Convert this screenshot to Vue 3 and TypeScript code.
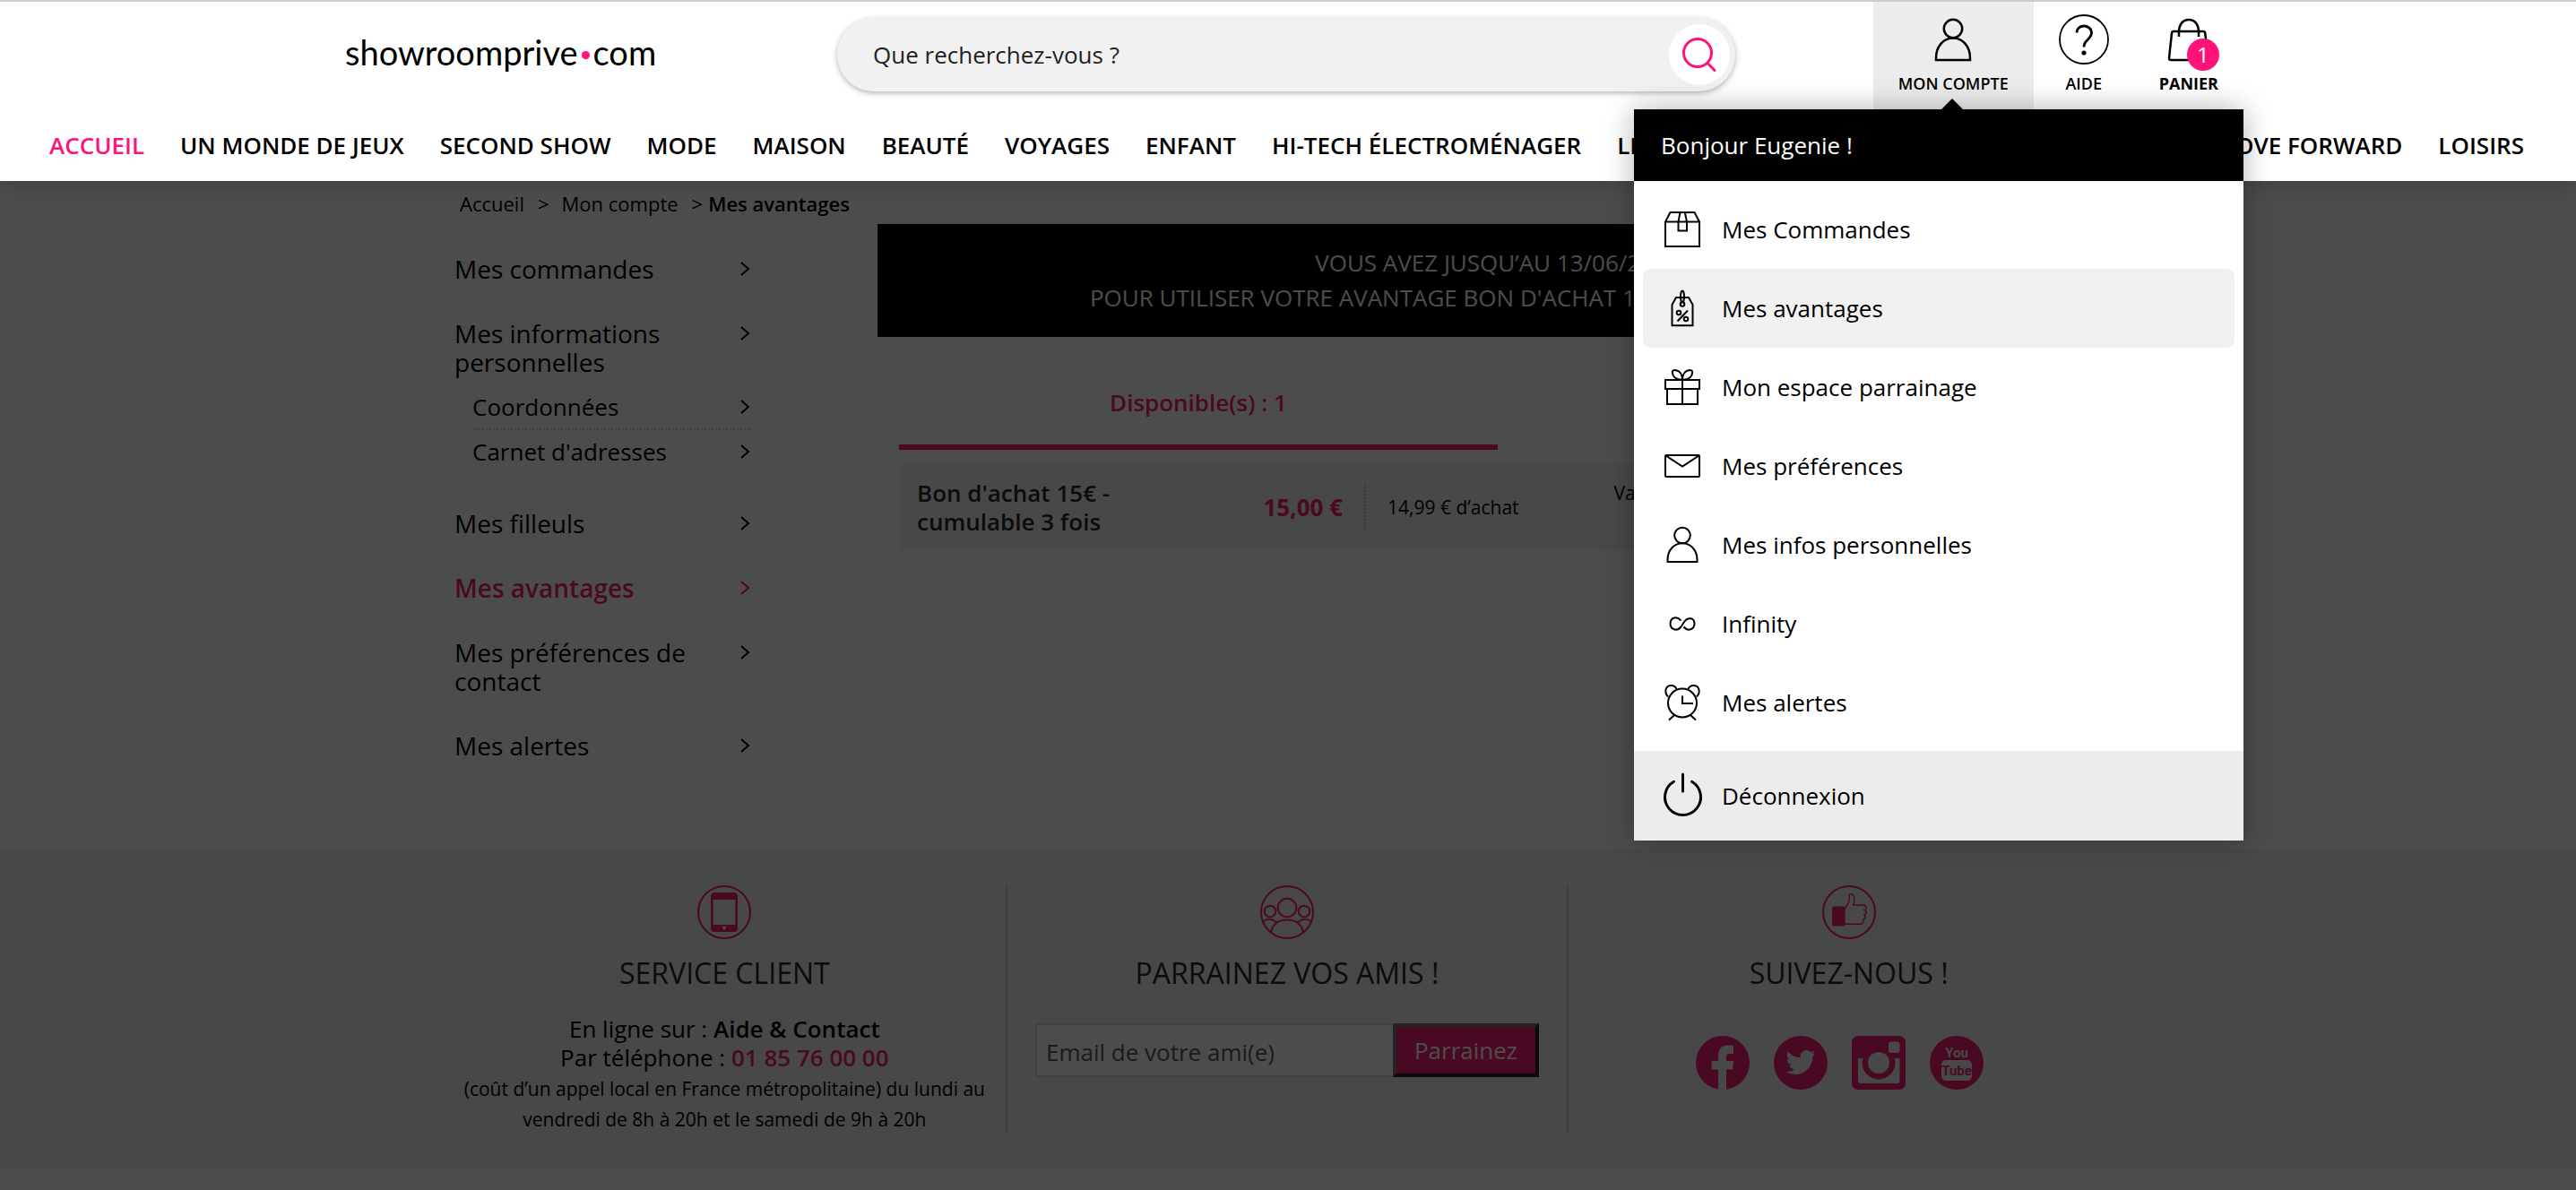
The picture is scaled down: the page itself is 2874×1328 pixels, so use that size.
<script setup lang="ts">
import { ref } from 'vue'

interface MenuEntry {
  label: string
  icon: string
}

const search = ref('')
const friendEmail = ref('')

const navStart: string[] = [
  'ACCUEIL',
  'UN MONDE DE JEUX',
  'SECOND SHOW',
  'MODE',
  'MAISON',
  'BEAUTÉ',
  'VOYAGES',
  'ENFANT',
  'HI-TECH ÉLECTROMÉNAGER',
  'LIFESTYLE',
]
const navEnd: string[] = ['MOVE FORWARD', 'LOISIRS']

const accountMenu: MenuEntry[] = [
  { label: 'Mes Commandes', icon: 'box' },
  { label: 'Mes avantages', icon: 'tag' },
  { label: 'Mon espace parrainage', icon: 'gift' },
  { label: 'Mes préférences', icon: 'mail' },
  { label: 'Mes infos personnelles', icon: 'person' },
  { label: 'Infinity', icon: 'infinity' },
  { label: 'Mes alertes', icon: 'alarm' },
]
const activeEntry = 'Mes avantages'

const sideMenu: { label: string; children?: string[] }[] = [
  { label: 'Mes commandes' },
  { label: 'Mes informations personnelles', children: ['Coordonnées', "Carnet d'adresses"] },
  { label: 'Mes filleuls' },
  { label: 'Mes avantages' },
  { label: 'Mes préférences de contact' },
  { label: 'Mes alertes' },
]
</script>

<template>
  <div class="page">
    <header class="header">
      <div class="top">
        <div class="top-inner">
          <a class="logo" href="#"><span>showroomprive</span><i class="logo-dot"></i><span>com</span></a>

          <form class="search" role="search" @submit.prevent>
            <input v-model="search" type="text" placeholder="Que recherchez-vous ?" aria-label="Rechercher" />
            <button type="submit" aria-label="Lancer la recherche">
              <svg viewBox="0 0 40 40" width="40" height="40" class="line pink-line">
                <circle cx="18" cy="18" r="15.5" />
                <path d="M29 29.5l8 8" stroke-linecap="round" />
              </svg>
            </button>
          </form>

          <div class="actions">
            <button type="button" class="action current" aria-expanded="true">
              <svg viewBox="0 0 56 56" width="56" height="56" class="line">
                <circle cx="28" cy="16" r="10.2" />
                <path d="M9 51v-2C9 36 17 26.500 28 26.500S47 36 47 49v2z" />
              </svg>
              <span>MON COMPTE</span>
            </button>
            <a class="action" href="#">
              <svg viewBox="0 0 56 56" width="56" height="56" class="line">
                <circle cx="28" cy="28" r="27" stroke-width="1.800" />
                <path d="M20 20.500c0-4.500 3.500-7.500 8-7.500s8.500 3 8.500 7.500c0 3.500-2 5.500-4.500 8-2.500 2.300-4 4-4 8" stroke-width="2.800" />
                <circle cx="28" cy="43" r="2.600" fill="#000" stroke="none" />
              </svg>
              <span>AIDE</span>
            </a>
            <a class="action basket" href="#">
              <span class="basket-icon">
                <svg viewBox="0 0 56 56" width="56" height="56" class="line">
                  <path d="M11 19h33q2 0 2.200 2l3.800 28q0 2-2 2H8q-2 0-2-2l3-28q.3-2 2-2z" />
                  <path d="M17 25v-5C17 11 21.500 6 28 6s11 5 11 14v5" />
                </svg>
                <b class="badge">1</b>
              </span>
              <span>PANIER</span>
            </a>

            <div class="account">
              <p class="hello">Bonjour Eugenie !</p>
              <ul>
                <li v-for="entry in accountMenu" :key="entry.label">
                  <a href="#" :class="{ active: entry.label === activeEntry }">
                    <svg viewBox="0 0 40 40" width="40" height="40" class="line">
                      <template v-if="entry.icon === 'box'">
                        <path d="M1 11.500L6.500 1h27L39 11.500V39H1zM1 11.500h38" />
                        <path d="M17.500 1l-2 10.500v10h9.500v-10L22.800 1" />
                      </template>
                      <template v-else-if="entry.icon === 'tag'">
                        <path d="M13 8h14l4.500 8v23.200h-23V16z" />
                        <ellipse cx="20" cy="7" rx="2" ry="6.500" />
                        <circle cx="20" cy="15.500" r="2.300" />
                        <circle cx="16" cy="25" r="2.300" />
                        <circle cx="24" cy="32" r="2.300" />
                        <path d="M26 22.500L14.500 34.500" />
                      </template>
                      <template v-else-if="entry.icon === 'gift'">
                        <path d="M1 12h38v10H1zM3 22h34v17H3zM20 12v27" />
                        <path d="M20 12C12 11.500 9 8 8.800 3.500 8.700 1.500 10 1 12 1c5 .5 8 5 8 11zM20 12c8-.5 11-4 11.200-8.500C31.300 1.500 30 1 28 1c-5 .5-8 5-8 11z" />
                      </template>
                      <template v-else-if="entry.icon === 'mail'">
                        <rect x="1" y="8" width="38" height="24" rx="1" />
                        <path d="M1.500 8.500L20 20.500l18.500-12" />
                      </template>
                      <template v-else-if="entry.icon === 'person'">
                        <circle cx="20" cy="9.500" r="8.800" />
                        <path d="M3.500 39v-2c0-11 7-18.700 16.500-18.700S36.500 26 36.500 37v2z" />
                      </template>
                      <template v-else-if="entry.icon === 'infinity'">
                        <path d="M18.500 16.500c-6-6-12-2.500-12 3.500s7 9.500 12 3.500l3.500-5.500c4.500-6.500 11.500-4 11.500 2s-7 9.500-12 3.500" />
                      </template>
                      <template v-else>
                        <circle cx="20" cy="20.500" r="16" />
                        <path d="M20 12.500v8.500h12M11 34l-6 5.500M29 34l6 5.500M4 13.500C-1 8 1.500 1 7.500 1c3 0 5 1.500 6 4M36 13.500C41 8 38.500 1 32.500 1c-3 0-5 1.500-6 4" />
                      </template>
                    </svg>
                    {{ entry.label }}
                  </a>
                </li>
              </ul>
              <button type="button" class="logout">
                <svg viewBox="0 0 40 40" width="40" height="40" class="line power">
                  <path d="M10.500 4.200a20 20 0 1 0 20 0M20.500-4v19" />
                </svg>
                Déconnexion
              </button>
            </div>
          </div>
        </div>
      </div>

      <nav class="nav">
        <div>
          <a v-for="(label, i) in navStart" :key="label" href="#" :class="{ here: i === 0 }">{{ label }}</a>
        </div>
        <div>
          <a v-for="label in navEnd" :key="label" href="#">{{ label }}</a>
        </div>
      </nav>
    </header>

    <div class="body">
      <main class="main">
        <div class="wrap">
          <div class="crumbs">
            <a href="#">Accueil</a><span>&gt;</span><a href="#">Mon compte</a><span>&gt;</span><strong>Mes avantages</strong>
          </div>
          <div class="columns">
            <aside class="side">
              <ul>
                <li v-for="item in sideMenu" :key="item.label" :class="{ selected: item.label === 'Mes avantages' }">
                  <a href="#">
                    <span>{{ item.label }}</span>
                    <svg viewBox="0 0 12 20" width="12" height="20" class="chevron"><path d="M2 3l8 7-8 7" /></svg>
                  </a>
                  <ul v-if="item.children" class="sub">
                    <li v-for="child in item.children" :key="child">
                      <a href="#">
                        <span>{{ child }}</span>
                        <svg viewBox="0 0 12 20" width="12" height="20" class="chevron"><path d="M2 3l8 7-8 7" /></svg>
                      </a>
                    </li>
                  </ul>
                </li>
              </ul>
            </aside>

            <section class="content">
              <p class="banner">
                VOUS AVEZ JUSQU’AU 13/06/2021<br />
                POUR UTILISER VOTRE AVANTAGE BON D'ACHAT 15€ - CUMULABLE 3 FOIS !
              </p>
              <div class="tabs">
                <button type="button" class="on">Disponible(s) : 1</button>
                <button type="button">Utilisé(s) : 0</button>
              </div>
              <div class="voucher">
                <h2>Bon d'achat 15€ - cumulable 3 fois</h2>
                <strong>15,00 €</strong>
                <span class="minimum">14,99 € d’achat</span>
                <span class="validity">Valable jusqu’au<br />13/06/2021</span>
              </div>
            </section>
          </div>
        </div>
      </main>

      <footer class="footer">
        <div class="footer-inner">
          <section>
            <svg viewBox="0 0 60 60" width="60" height="60" class="round">
              <circle cx="30" cy="30" r="29" />
              <rect x="16" y="9" width="28" height="42" rx="3" class="solid" />
              <rect x="17.500" y="16" width="25" height="28" class="cut" />
              <circle cx="30" cy="47.500" r="2" class="cut" />
            </svg>
            <h3>SERVICE CLIENT</h3>
            <p class="lines">
              En ligne sur : <a href="#">Aide &amp; Contact</a><br />
              Par téléphone : <a href="#" class="phone">01 85 76 00 00</a>
            </p>
            <p class="hours">
              (coût d’un appel local en France métropolitaine) du lundi au<br />
              vendredi de 8h à 20h et le samedi de 9h à 20h
            </p>
          </section>
          <section>
            <svg viewBox="0 0 60 60" width="60" height="60" class="round">
              <circle cx="30" cy="30" r="29" />
              <circle cx="30" cy="25" r="10.300" />
              <circle cx="11" cy="29" r="6.300" />
              <circle cx="49" cy="29" r="6.300" />
              <path d="M12 52C14 43 21 38.500 30 38.500S46 43 48 52M3.500 40.500C8 36.500 14 37 18.500 42M56.500 40.500C52 36.500 46 37 41.500 42" />
            </svg>
            <h3>PARRAINEZ VOS AMIS !</h3>
            <form class="invite" @submit.prevent>
              <input v-model="friendEmail" type="email" placeholder="Email de votre ami(e)" aria-label="Email de votre ami(e)" />
              <button type="submit">Parrainez</button>
            </form>
          </section>
          <section>
            <svg viewBox="0 0 60 60" width="60" height="60" class="round">
              <circle cx="30" cy="30" r="29" />
              <rect x="12" y="24.500" width="12.500" height="20" rx="1" class="solid" />
              <path d="M24.500 27c3-4 5-6.500 5.500-10 .3-2 0-4 .2-6 .3-2 4.300-1.800 5.300 1.500 1 3-.2 6-.5 9.500h11c3.500 0 4 5 1.500 5.500 2.500 1.500 2 5-.5 5.500 1.500 2 .5 5-1.500 5.500 1 3-.5 4.800-3 4.800H27l-2.500-1" stroke-width="1.500" />
            </svg>
            <h3>SUIVEZ-NOUS !</h3>
            <div class="social">
              <a href="#" aria-label="Facebook">
                <svg viewBox="0 0 60 60" width="60" height="60">
                  <circle cx="30" cy="30" r="30" class="fill" />
                  <path class="cut" d="M25 60V37.500h-7.500V28H25v-5.500C25 14.500 29 10.500 35 10.500h7V20h-4.500c-2.800 0-3.500 1.500-3.500 4v4h8l-1 9.500h-7V60z" />
                </svg>
              </a>
              <a href="#" aria-label="Twitter">
                <svg viewBox="0 0 60 60" width="60" height="60">
                  <circle cx="30" cy="30" r="30" class="fill" />
                  <path class="cut" transform="translate(13.500 13) scale(1.380)" d="M23.950 4.570a10 10 0 0 1-2.820.77 4.960 4.960 0 0 0 2.160-2.720c-.95.560-2 .96-3.130 1.190a4.920 4.920 0 0 0-8.380 4.480C7.690 8.100 4.070 6.130 1.640 3.160a4.820 4.820 0 0 0-.67 2.480c0 1.710.87 3.210 2.190 4.100a4.900 4.900 0 0 1-2.230-.62v.06a4.920 4.920 0 0 0 3.950 4.830 5 5 0 0 1-2.210.08 4.940 4.940 0 0 0 4.600 3.420A9.870 9.870 0 0 1 0 19.540a14 14 0 0 0 7.550 2.210c9.050 0 14-7.500 14-13.980 0-.21 0-.42-.02-.63a9.940 9.940 0 0 0 2.460-2.550z" />
                </svg>
              </a>
              <a href="#" aria-label="Instagram">
                <svg viewBox="0 0 60 60" width="60" height="60">
                  <rect width="60" height="60" rx="7" class="fill" />
                  <path class="cut" d="M7 25h46.500v25q0 3-3 3H10q-3 0-3-3z" />
                  <circle cx="30" cy="30" r="18.500" class="fill" />
                  <circle cx="30" cy="30" r="12" class="cut" />
                  <rect x="41" y="6.500" width="12.500" height="12.500" rx="3" class="cut" />
                </svg>
              </a>
              <a href="#" aria-label="YouTube">
                <svg viewBox="0 0 60 60" width="60" height="60">
                  <circle cx="30" cy="30" r="30" class="fill" />
                  <rect x="13" y="27" width="34" height="23" rx="5" class="cut" />
                  <text x="30" y="24" class="cut">You</text>
                  <text x="30" y="44" class="fill">Tube</text>
                </svg>
              </a>
            </div>
          </section>
        </div>
      </footer>
      <div class="overlay"></div>
    </div>
  </div>
</template>

<style>
body {
  margin: 0;
}
</style>

<style scoped>
.page {
  display: flex;
  flex-direction: column;
  min-height: 100vh;
  overflow: hidden;
  font: 26px/32px 'Open Sans', 'Noto Sans', sans-serif;
  color: #000;
  background: #fff;
}
* {
  box-sizing: border-box;
}
p,
h2,
h3,
ul {
  margin: 0;
  padding: 0;
  list-style: none;
}
a {
  color: inherit;
  text-decoration: none;
}
button,
input {
  font: inherit;
  color: inherit;
  border: 0;
  background: none;
}
button {
  padding: 0;
  cursor: pointer;
}
svg {
  display: block;
  flex: none;
  overflow: visible;
}
.line {
  fill: none;
  stroke: #000;
  stroke-width: 2;
}
.pink-line {
  stroke: #ff1279;
  stroke-width: 3;
}

/* Header */
.header {
  position: relative;
  z-index: 2;
  background: #fff;
  border-top: 2px solid #ccc;
  box-shadow: 0 4px 16px rgba(0, 0, 0, 0.15);
}
.top {
  padding-right: 4px;
}
.top-inner {
  display: grid;
  grid-template-columns: 1fr 1002px 1fr;
  position: relative;
  max-width: 2136px;
  height: 120px;
  margin: 0 auto;
}
.logo {
  display: flex;
  align-items: center;
  gap: 4px;
  align-self: start;
  padding: 32px 0 0 18px;
  font: 400 38px/48px Lato, sans-serif;
}
.logo-dot {
  width: 9px;
  height: 9px;
  margin-top: 6px;
  border-radius: 50%;
  background: #ff1279;
}
.search {
  display: flex;
  align-items: center;
  align-self: start;
  height: 82px;
  margin-top: 18px;
  padding: 0 6px 0 40px;
  border-radius: 41px;
  background: #f1f1f1;
  box-shadow: 0 2px 6px rgba(0, 0, 0, 0.3);
}
.search input {
  flex: 1;
  min-width: 0;
  height: 60px;
  padding: 0;
  outline: 0;
}
.search input::placeholder {
  color: #222;
  opacity: 1;
}
.search button {
  display: grid;
  place-items: center;
  width: 68px;
  height: 68px;
  border-radius: 50%;
  background: #fff;
}
.actions {
  display: flex;
  justify-content: flex-end;
}
.action {
  display: flex;
  flex-direction: column;
  align-items: center;
  gap: 9px;
  padding: 14px 28px 0;
  font-size: 18px;
  font-weight: 600;
  line-height: 24px;
}
.action .line {
  stroke-width: 2.5;
}
.current {
  position: relative;
  background: #ececec;
}
.current::after {
  content: '';
  position: absolute;
  bottom: 0;
  left: 50%;
  margin-left: -13px;
  border: 12px solid transparent;
  border-top: 0;
  border-bottom-color: #000;
}
.basket {
  font-weight: 700;
}
.basket-icon {
  position: relative;
}
.badge {
  position: absolute;
  top: 27px;
  left: 26px;
  width: 36px;
  height: 36px;
  border-radius: 50%;
  background: #ff1279;
  color: #fff;
  font-size: 24px;
  font-weight: 400;
  line-height: 36px;
  text-align: center;
}
.account {
  position: absolute;
  top: 100%;
  right: 0;
  z-index: 3;
  width: 680px;
  background: #fff;
  box-shadow: 0 0 30px rgba(0, 0, 0, 0.3);
}
.hello {
  padding: 24px 30px;
  background: #000;
  color: #fff;
}
.account ul {
  padding: 10px;
}
.account li a,
.logout {
  display: flex;
  align-items: center;
  gap: 24px;
  height: 88px;
  padding: 0 24px;
  border-radius: 8px;
}
.account .active {
  background: #f1f1f1;
}
.account .logout {
  width: 100%;
  height: 100px;
  padding: 0 34px;
  border-radius: 0;
  background: #ececec;
}
.power {
  stroke-width: 3;
  stroke-linecap: round;
}
.nav {
  display: flex;
  justify-content: space-between;
  height: 80px;
  padding: 0 58px 0 55px;
  font-weight: 600;
  line-height: 80px;
  white-space: nowrap;
}
.nav div {
  display: flex;
  gap: 40px;
}
.here {
  color: #ff1279;
}

/* Page body */
.body {
  position: relative;
  flex: 1;
}
.overlay {
  position: absolute;
  inset: 0;
  background: rgba(0, 0, 0, 0.7);
}
.main {
  padding: 8px 4px 80px 0;
}
.wrap {
  max-width: 1880px;
  margin: 0 auto;
  padding: 0 12px;
}
.crumbs {
  display: flex;
  height: 40px;
  padding-left: 6px;
  font-size: 22px;
  line-height: 34px;
}
.crumbs span {
  margin: 0 14px 0 15px;
}
.crumbs strong {
  margin-left: -8px;
  font-weight: 600;
}
.columns {
  display: flex;
  justify-content: space-between;
}
.side {
  width: 332px;
  padding-top: 14px;
  font-size: 28px;
}
.side li {
  padding: 20px 0;
}
.side a {
  display: flex;
  justify-content: space-between;
}
.side a span {
  max-width: 280px;
}
.side .chevron {
  margin: 6px 2px 0 0;
  fill: none;
  stroke: currentColor;
  stroke-width: 2;
}
.side .sub {
  margin: 10px 0 0 20px;
  font-size: 26px;
}
.side .sub li {
  padding: 8px 0;
}
.side .sub li + li {
  border-top: 2px dotted #d0d0d0;
}
.selected {
  color: #f81f74;
}
.selected span {
  font-weight: 600;
}
.content {
  width: 1384px;
}
.banner {
  padding: 24px;
  background: #000;
  color: #fff;
  line-height: 39px;
  text-align: center;
}
.tabs {
  display: flex;
  margin: 16px 24px;
}
.tabs button {
  flex: 1;
  height: 110px;
  padding-top: 9px;
  border-bottom: 6px solid transparent;
  font-weight: 600;
}
.tabs .on {
  border-color: #f81f74;
  color: #f81f74;
}
.voucher {
  display: flex;
  align-items: center;
  margin: 0 24px;
  padding: 16px 20px;
  background: #f0f0f0;
  font-size: 21px;
}
.voucher h2 {
  width: 260px;
  color: #2a2a2a;
  font-size: 26px;
  font-weight: 600;
}
.voucher strong {
  width: 215px;
  color: #f81f74;
  font-size: 26px;
  text-align: right;
}
.minimum {
  margin-left: 24px;
  padding: 10px 0 10px 24px;
  border-left: 2px dotted #c8c8c8;
}
.validity {
  margin-left: 106px;
  text-align: center;
}

/* Footer */
.footer {
  padding: 40px 4px 40px 0;
  background: #f0f0f0;
}
.footer-inner {
  display: grid;
  grid-template-columns: repeat(3, 1fr);
  max-width: 1880px;
  margin: 0 auto;
}
.footer section {
  display: flex;
  flex-direction: column;
  align-items: center;
  height: 276px;
  text-align: center;
}
.footer section + section {
  border-left: 2px solid #d4d4d4;
}
.round {
  fill: none;
  stroke: #f81f74;
  stroke-width: 2;
}
.solid {
  fill: #f81f74;
}
.fill {
  fill: #f81f74;
}
.cut {
  fill: #f0f0f0;
  stroke: none;
}
.footer h3 {
  margin: 16px 0 24px;
  color: #2a2a2a;
  font-size: 32px;
  font-weight: 400;
  line-height: 44px;
}
.lines a {
  font-weight: 600;
}
.lines .phone {
  color: #f81f74;
}
.hours {
  margin-top: 2px;
  font-size: 21px;
  line-height: 34px;
}
.invite {
  display: flex;
  margin-top: 10px;
}
.invite input {
  width: 399px;
  height: 60px;
  padding: 4px 10px 0;
  border: 2px solid #d6d6d6;
  border-right: 0;
  background: #fff;
}
.invite input::placeholder {
  color: #5a5a5a;
  opacity: 1;
}
.invite button {
  width: 163px;
  height: 60px;
  border: 4px solid;
  border-color: #767676 #222 #222 #767676;
  background: #f81f74;
  color: #fff;
}
.social {
  display: flex;
  gap: 27px;
  margin: 24px 20px 0 0;
}
.social text {
  font: 700 15px Roboto, sans-serif;
  text-anchor: middle;
}
</style>
